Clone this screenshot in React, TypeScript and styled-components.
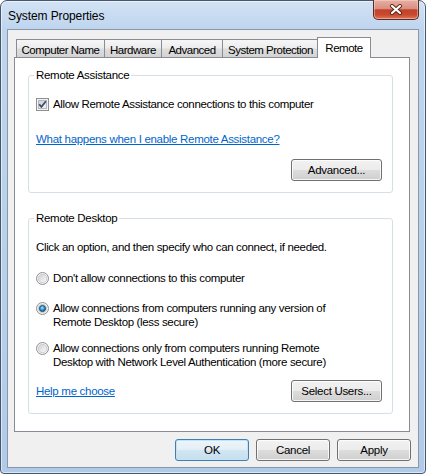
import React from 'react';
import styled, { createGlobalStyle } from 'styled-components';

const GlobalStyle = createGlobalStyle`
  html, body { margin: 0; padding: 0; background: #ffffff; }
  * { box-sizing: border-box; }
`;

const uiFont = `"Liberation Sans", Arial, sans-serif`;

// window chrome
const Window = styled.div`
  width: 426px;
  height: 474px;
  display: flex;
  flex-direction: column;
  border: 1px solid #44576f;
  border-radius: 7px 7px 4px 4px;
  background: linear-gradient(180deg, #d2e2f4 0px, #bfd5ee 28px, #b9d0eb 55%, #b1cae8 100%);
  box-shadow: inset 0 0 0 1px rgba(255, 255, 255, 0.55);
  font-family: ${uiFont};
  color: #000;
`;

const TitleBar = styled.div`
  height: 28px;
  flex: none;
  display: flex;
  align-items: center;
  justify-content: space-between;
  padding: 0 6px 0 7px;
`;

const Title = styled.span`
  font-size: 12px;
  line-height: 14px;
  letter-spacing: -0.1px;
  margin-top: 1px;
`;

const CloseButton = styled.div`
  align-self: flex-start;
  margin-top: -1px;
  width: 46px;
  height: 20px;
  display: flex;
  align-items: center;
  justify-content: center;
  border: 1px solid #5a2b22;
  border-top: none;
  border-radius: 0 0 5px 5px;
  background: linear-gradient(180deg, #e7b0a4 0%, #d88f80 45%, #c3412a 52%, #c84a30 78%, #e07a5c 100%);
  box-shadow: inset 0 0 0 1px rgba(255, 220, 210, 0.45);
`;

const Client = styled.div`
  flex: 1;
  margin: 0 6px 5px 6px;
  border: 1px solid #8a97a8;
  background: #f0f0f0;
  padding: 7px 8px 0 6px;
  display: flex;
  flex-direction: column;
`;

// tabs
const TabStrip = styled.div`
  display: flex;
  align-items: flex-end;
  height: 21px;
  padding-left: 2px;
  margin-bottom: -1px;
  position: relative;
  z-index: 1;
`;

const Tab = styled.div<{ $w: number; $active?: boolean }>`
  width: ${p => p.$w}px;
  height: ${p => (p.$active ? 21 : 18)}px;
  margin-bottom: ${p => (p.$active ? 0 : 1)}px;
  margin-left: ${p => (p.$active ? -2 : -1)}px;
  padding-top: ${p => (p.$active ? 0 : 2)}px;
  border: 1px solid #898c95;
  border-bottom: none;
  background: ${p =>
    p.$active ? '#ffffff' : 'linear-gradient(180deg, #f6f6f6 0%, #ececec 48%, #dedede 52%, #d3d3d3 100%)'};
  display: flex;
  align-items: center;
  justify-content: center;
  font-size: 11.5px;
  line-height: 14px;
  letter-spacing: -0.5px;
  white-space: nowrap;
  position: relative;
  z-index: ${p => (p.$active ? 2 : 1)};
  &:first-child { margin-left: 0; }
`;

const Panel = styled.div`
  background: #ffffff;
  border: 1px solid #898c95;
  padding: 10px 16px 17px 13px;
`;

// group boxes
const Group = styled.fieldset<{ $mt?: number }>`
  margin: ${p => p.$mt ?? 0}px 0 0 0;
  min-width: 0;
  border: 1px solid #d5dfe5;
  border-radius: 3px;
  padding: 0 10px 11px 7px;
`;

const Legend = styled.legend`
  padding: 0 2px;
  margin-left: -2px;
  font-size: 11.5px;
  line-height: 14px;
  letter-spacing: -0.3px;
`;

const Text = styled.div<{ $mt?: number }>`
  margin-top: ${p => p.$mt ?? 0}px;
  font-size: 11.5px;
  line-height: 14px;
  letter-spacing: -0.35px;
  white-space: nowrap;
`;

const OptionRow = styled.label<{ $mt: number }>`
  display: flex;
  align-items: flex-start;
  gap: 4px;
  margin-top: ${p => p.$mt}px;
  font-size: 11.5px;
  line-height: 14px;
  letter-spacing: -0.35px;
  white-space: nowrap;
  svg { flex: none; margin-top: 0.5px; }
`;

const LinkText = styled.a<{ $mt?: number }>`
  display: inline-block;
  margin-top: ${p => p.$mt ?? 0}px;
  color: #0066cc;
  text-decoration: underline;
  font-size: 11.5px;
  line-height: 14px;
  letter-spacing: -0.3px;
  cursor: pointer;
`;

const ActionRow = styled.div<{ $mt: number; $end?: boolean }>`
  display: flex;
  align-items: center;
  justify-content: ${p => (p.$end ? 'flex-end' : 'space-between')};
  margin-top: ${p => p.$mt}px;
`;

const Button = styled.button<{ $w: number; $default?: boolean }>`
  width: ${p => p.$w}px;
  height: 22px;
  padding: 0;
  font-family: ${uiFont};
  font-size: 11.5px;
  letter-spacing: -0.3px;
  color: #000;
  border: 1px solid ${p => (p.$default ? '#3c7fb1' : '#707070')};
  border-radius: 3px;
  background: ${p =>
    p.$default
      ? 'linear-gradient(180deg, #edf5fa 0%, #e2eef6 50%, #d3e6f2 50%, #c6dfee 100%)'
      : 'linear-gradient(180deg, #f2f2f2 0%, #ebebeb 50%, #dddddd 50%, #cfcfcf 100%)'};
  box-shadow: inset 0 0 0 1px ${p => (p.$default ? '#c5e3f5' : 'rgba(255, 255, 255, 0.8)')};
`;

const Footer = styled.div`
  display: flex;
  justify-content: flex-end;
  gap: 7px;
  margin-top: 7px;
  margin-right: -1px;
`;

function CloseGlyph() {
  return (
    <svg width="14" height="11" viewBox="0 0 14 11">
      <path d="M3 2 L11 9 M11 2 L3 9" stroke="#5b2218" strokeWidth="4" strokeLinecap="round" />
      <path d="M3 2 L11 9 M11 2 L3 9" stroke="#ffffff" strokeWidth="2.2" strokeLinecap="round" />
    </svg>
  );
}

function CheckBox() {
  return (
    <svg width="13" height="13" viewBox="0 0 13 13">
      <defs>
        <linearGradient id="cbIn" x1="0" y1="0" x2="1" y2="1">
          <stop offset="0" stopColor="#c9cdd4" />
          <stop offset="1" stopColor="#f5f6f7" />
        </linearGradient>
      </defs>
      <rect x="0.5" y="0.5" width="12" height="12" fill="#f4f4f4" stroke="#8f8f8f" />
      <rect x="2.5" y="2.5" width="8" height="8" fill="url(#cbIn)" stroke="#b4b9c0" />
      <path d="M3.2 6.3 L5.4 8.9 L9.9 3.3" fill="none" stroke="#3f4b68" strokeWidth="1.7" />
    </svg>
  );
}

function Radio({ checked }: { checked?: boolean }) {
  return (
    <svg width="13" height="13" viewBox="0 0 13 13">
      <defs>
        <linearGradient id="rdIn" x1="0" y1="0" x2="1" y2="1">
          <stop offset="0" stopColor="#cdd0d5" />
          <stop offset="1" stopColor="#fafafa" />
        </linearGradient>
        <radialGradient id="rdDot" cx="0.45" cy="0.4" r="0.65">
          <stop offset="0" stopColor="#a6e4fa" />
          <stop offset="0.55" stopColor="#2a8fcc" />
          <stop offset="1" stopColor="#0e4a76" />
        </radialGradient>
      </defs>
      <circle cx="6.5" cy="6.5" r="6" fill="#f4f4f4" stroke="#8f8f8f" />
      <circle cx="6.5" cy="6.5" r="4.2" fill="url(#rdIn)" stroke="#c3c6ca" strokeWidth="0.8" />
      {checked && <circle cx="6.5" cy="6.5" r="3.1" fill="url(#rdDot)" stroke="#1b4567" strokeWidth="0.8" />}
    </svg>
  );
}

const tabs = [
  { label: 'Computer Name', w: 89 },
  { label: 'Hardware', w: 58 },
  { label: 'Advanced', w: 62 },
  { label: 'System Protection', w: 97 },
  { label: 'Remote', w: 54, active: true },
];

export default function App() {
  return (
    <>
      <GlobalStyle />
      <Window>
        <TitleBar>
          <Title>System Properties</Title>
          <CloseButton>
            <CloseGlyph />
          </CloseButton>
        </TitleBar>
        <Client>
          <TabStrip>
            {tabs.map(t => (
              <Tab key={t.label} $w={t.w} $active={t.active}>{t.label}</Tab>
            ))}
          </TabStrip>
          <Panel>
            <Group>
              <Legend>Remote Assistance</Legend>
              <OptionRow $mt={15}>
                <CheckBox />
                <span>Allow Remote Assistance connections to this computer</span>
              </OptionRow>
              <LinkText $mt={21}>What happens when I enable Remote Assistance?</LinkText>
              <ActionRow $mt={12} $end>
                <Button $w={91}>Advanced...</Button>
              </ActionRow>
            </Group>

            <Group $mt={18}>
              <Legend>Remote Desktop</Legend>
              <Text $mt={15}>Click an option, and then specify who can connect, if needed.</Text>
              <OptionRow $mt={17}>
                <Radio />
                <span>Don't allow connections to this computer</span>
              </OptionRow>
              <OptionRow $mt={16}>
                <Radio checked />
                <span>
                  Allow connections from computers running any version of
                  <br />
                  Remote Desktop (less secure)
                </span>
              </OptionRow>
              <OptionRow $mt={12}>
                <Radio />
                <span>
                  Allow connections only from computers running Remote
                  <br />
                  Desktop with Network Level Authentication (more secure)
                </span>
              </OptionRow>
              <ActionRow $mt={11}>
                <LinkText>Help me choose</LinkText>
                <Button $w={91}>Select Users...</Button>
              </ActionRow>
            </Group>
          </Panel>
          <Footer>
            <Button $w={74} $default>OK</Button>
            <Button $w={74}>Cancel</Button>
            <Button $w={74}>Apply</Button>
          </Footer>
        </Client>
      </Window>
    </>
  );
}
